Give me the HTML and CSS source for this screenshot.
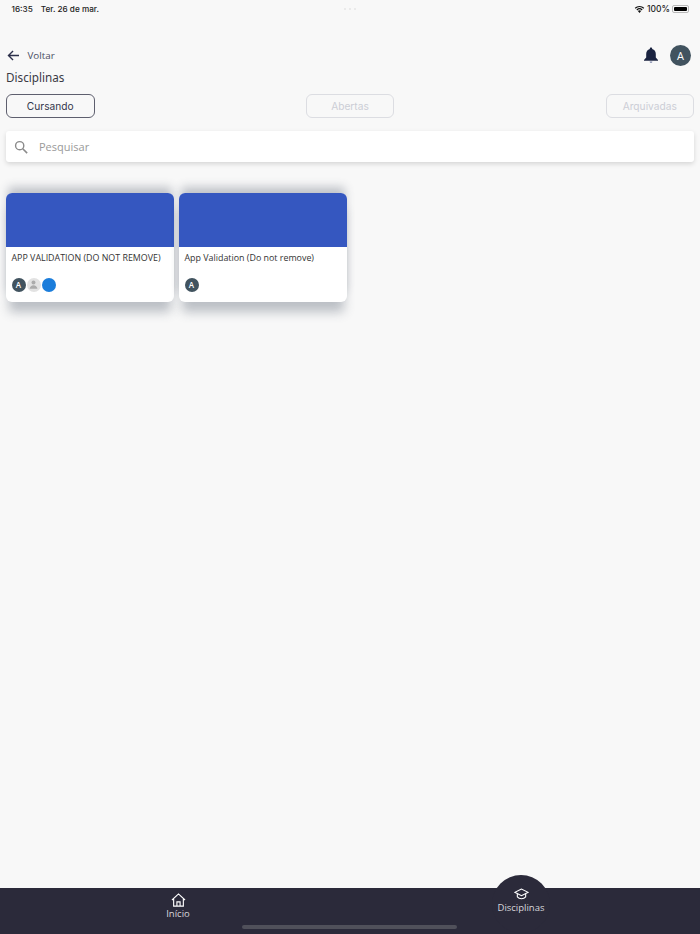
FILE: index.html
```html
<!DOCTYPE html>
<html lang="pt-BR">
<head>
    <meta charset="UTF-8">
    <meta name="viewport" content="width=device-width, initial-scale=1.0">
    <title>Disciplinas</title>
    <link rel="stylesheet" href="styles.css">
</head>
<body>
    <div class="status-bar">
        <div class="status-left"><span>16:35</span><span>Ter. 26 de mar.</span></div>
        <div class="status-dots"><i></i><i></i><i></i></div>
        <div class="status-right">
            <svg class="wifi" viewBox="0 0 14 10" width="11" height="8">
                <path d="M7 10 4.900 7.600a3 3 0 0 1 4.200 0z" fill="#111"/>
                <path d="M3.600 6.300a4.900 4.900 0 0 1 6.800 0" fill="none" stroke="#111" stroke-width="1.500"/>
                <path d="M1.500 4a8 8 0 0 1 11 0" fill="none" stroke="#111" stroke-width="1.500"/>
            </svg>
            <span>100%</span>
            <span class="battery"><span class="battery-fill"></span></span>
        </div>
    </div>

    <div class="top-row">
        <a class="back">
            <svg viewBox="0 0 14 12" width="13" height="11">
                <path d="M13 6H2M6.500 1 1.500 6l5 5" fill="none" stroke="#2b2f4a" stroke-width="1.500"/>
            </svg>
            <span>Voltar</span>
        </a>
        <div class="top-actions">
            <svg class="bell" viewBox="0 0 16 17" width="16" height="17">
                <path d="M8 0.500c-.7 0-1.200.5-1.200 1.200v.4C4.500 2.700 3.200 4.700 3.200 7v3.500L1 13v.7h14V13l-2.200-2.500V7c0-2.300-1.300-4.300-3.600-4.900v-.4C9.200 1 8.700.5 8 .5z" fill="#1a2340"/>
                <path d="M6.600 14.500a1.400 1.400 0 0 0 2.800 0z" fill="#7d86a8"/>
            </svg>
            <span class="avatar avatar-big">A</span>
        </div>
    </div>

    <h1>Disciplinas</h1>

    <div class="tabs">
        <button class="tab tab-active">Cursando</button>
        <button class="tab">Abertas</button>
        <button class="tab">Arquivadas</button>
    </div>

    <div class="search">
        <svg viewBox="0 0 16 16" width="14" height="14">
            <circle cx="6.500" cy="6.500" r="4.700" fill="none" stroke="#8a8a8a" stroke-width="1.600"/>
            <path d="M10 10l5 5" stroke="#8a8a8a" stroke-width="1.800"/>
        </svg>
        <span>Pesquisar</span>
    </div>

    <div class="cards">
        <div class="card">
            <div class="card-cover"></div>
            <div class="card-body">
                <div class="card-title">APP VALIDATION (DO NOT REMOVE)</div>
                <div class="members">
                    <span class="avatar">A</span>
                    <span class="avatar avatar-gray">
                        <svg viewBox="0 0 14 14" width="11" height="11">
                            <circle cx="7" cy="4.500" r="2.500" fill="#ababab"/>
                            <path d="M2 12.500c.5-3 2.500-4.500 5-4.500s4.500 1.500 5 4.500z" fill="#ababab"/>
                        </svg>
                    </span>
                    <span class="avatar avatar-blue"></span>
                </div>
            </div>
        </div>
        <div class="card">
            <div class="card-cover"></div>
            <div class="card-body">
                <div class="card-title">App Validation (Do not remove)</div>
                <div class="members">
                    <span class="avatar">A</span>
                </div>
            </div>
        </div>
    </div>

    <nav class="bottom-nav">
        <span class="nav-bump"></span>
        <a class="nav-item">
            <svg viewBox="0 0 16 15" width="15" height="14">
                <path d="M1 7.500 8 1l7 6.500M2.800 6.500V14h10.400V6.500M6.300 14V9.500h3.400V14" fill="none" stroke="#fff" stroke-width="1.200"/>
            </svg>
            <span>Início</span>
        </a>
        <a class="nav-item nav-item-active">
            <svg viewBox="0 0 18 14" width="15" height="12">
                <path d="M9 1 1 5l8 4 8-4z" fill="none" stroke="#fff" stroke-width="1.300"/>
                <path d="M4 7v3.500c1.200 1.500 3 2.200 5 2.200s3.800-.7 5-2.200V7" fill="none" stroke="#fff" stroke-width="1.300"/>
            </svg>
            <span>Disciplinas</span>
        </a>
        <span class="home-bar"></span>
    </nav>
</body>
</html>
```

FILE: styles.css
```css
* {
    box-sizing: border-box;
}
html, body {
    height: 100%;
}
body {
    margin: 0;
    height: 934px;
    overflow: hidden;
    display: flex;
    flex-direction: column;
    background-color: #f8f8f8;
    color: #333333;
    font-family: 'Open Sans', sans-serif;
}

/* barra de status */
.status-bar {
    display: flex;
    align-items: center;
    justify-content: space-between;
    height: 17px;
    padding: 0 11px 0 11.500px;
    font-family: 'Inter', sans-serif;
    font-size: 8.200px;
    font-weight: 500;
    color: #222222;
}
.status-left {
    flex: 1;
    display: flex;
    gap: 8px;
}
.status-dots {
    display: flex;
    gap: 3px;
}
.status-dots i {
    width: 2px;
    height: 2px;
    border-radius: 50%;
    background-color: #e6e6e6;
}
.status-right {
    flex: 1;
    display: flex;
    align-items: center;
    justify-content: flex-end;
    gap: 2px;
    font-size: 8.500px;
}
.battery {
    width: 17px;
    height: 8px;
    padding: 1px;
    border: 1px solid #b9b9b9;
    border-radius: 2px;
    display: block;
}
.battery-fill {
    display: block;
    height: 100%;
    background-color: #000000;
    border-radius: 1px;
}

/* topo */
.top-row {
    display: flex;
    align-items: center;
    justify-content: space-between;
    height: 22px;
    margin-top: 27px;
    padding: 0 9px 0 7px;
}
.back {
    display: flex;
    align-items: center;
    gap: 7.500px;
    font-size: 9.800px;
    color: #4a4d63;
}
.top-actions {
    display: flex;
    align-items: center;
    gap: 11px;
}
.avatar {
    width: 14px;
    height: 14px;
    border-radius: 50%;
    background-color: #41535f;
    color: #ffffff;
    font-size: 8px;
    font-weight: 600;
    display: flex;
    align-items: center;
    justify-content: center;
}
.avatar-big {
    width: 21px;
    height: 21px;
    font-size: 11px;
    font-weight: 400;
}
.avatar-gray {
    background-color: #e2e2e2;
}
.avatar-blue {
    background-color: #1b7ddb;
}
h1 {
    margin: 2.500px 0 0;
    padding-left: 6px;
    font-size: 11.700px;
    line-height: 16px;
    font-weight: 400;
    font-family: 'Noto Sans', sans-serif;
    color: #3a3a44;
}

/* abas */
.tabs {
    display: flex;
    justify-content: space-between;
    margin-top: 9.500px;
    padding: 0 6px;
}
.tab {
    width: 88.500px;
    height: 23.500px;
    padding: 0;
    background: none;
    border: 1px solid #dcdde2;
    border-radius: 6px;
    font-family: 'Inter', sans-serif;
    font-size: 10.200px;
    color: #ccced6;
}
.tab-active {
    border-color: #5e5f6e;
    color: #34364c;
}

/* busca */
.search {
    display: flex;
    align-items: center;
    gap: 11px;
    height: 31px;
    margin: 13.500px 6px 0;
    padding-left: 8px;
    background-color: #ffffff;
    border-radius: 3px;
    box-shadow: 0 2px 5px rgba(0, 0, 0, 0.14);
    font-size: 11px;
    color: #9a9a9a;
}

/* cartões */
.cards {
    display: flex;
    gap: 5px;
    margin-top: 31px;
    padding: 0 6px;
    flex: 1;
    align-items: flex-start;
}
.card {
    width: 168px;
    height: 109px;
    background-color: #ffffff;
    border-radius: 6px;
    overflow: hidden;
    box-shadow: 0 -8px 10px -2px rgba(60, 70, 90, 0.3), 0 13px 11px -3px rgba(60, 70, 90, 0.32);
}
.card-cover {
    height: 54px;
    background-color: #3557c0;
}
.card-body {
    padding: 4.500px 5.500px 0;
}
.card-title {
    font-size: 8.900px;
    line-height: 12px;
    color: #333333;
    white-space: nowrap;
}
.members {
    display: flex;
    gap: 1px;
    margin-top: 14px;
}

/* navegação inferior */
.bottom-nav {
    position: relative;
    height: 46px;
    flex-shrink: 0;
    display: grid;
    grid-template-columns: 300px 300px;
    column-gap: 43px;
    padding: 0 28px;
    background-color: #2b2a3a;
}
.nav-bump {
    position: absolute;
    left: 492px;
    top: -13px;
    width: 58px;
    height: 58px;
    border-radius: 50%;
    background-color: #2b2a3a;
}
.nav-item {
    position: relative;
    display: flex;
    flex-direction: column;
    align-items: center;
    padding-top: 5px;
    font-size: 9.500px;
    line-height: 13px;
    color: #d8d8dc;
}
.nav-item-active {
    padding-top: 0;
    line-height: 15px;
}
.home-bar {
    position: absolute;
    left: 242px;
    bottom: 5px;
    width: 215px;
    height: 4px;
    border-radius: 2px;
    background-color: #50505a;
}
```
